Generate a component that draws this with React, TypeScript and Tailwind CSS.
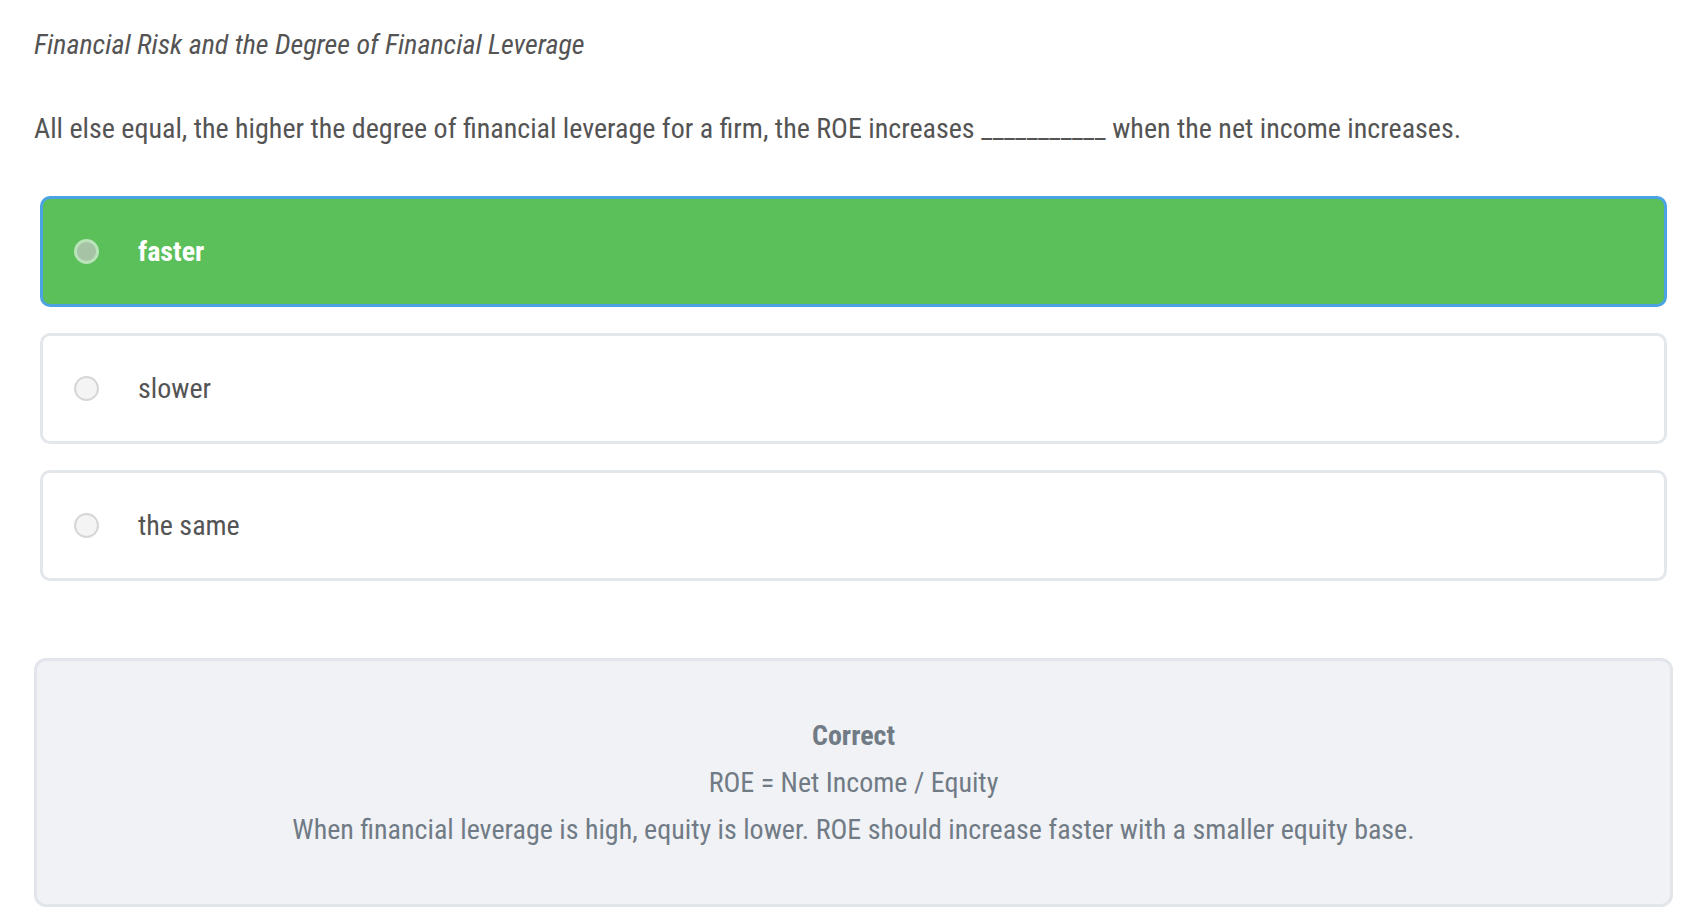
const font = "font-['Roboto_Condensed','Liberation_Sans_Narrow','DejaVu_Sans_Condensed',Roboto,sans-serif] [font-stretch:condensed]";

const options = [
  { label: 'faster', selected: true },
  { label: 'slower', selected: false },
  { label: 'the same', selected: false },
];

function Radio({ selected }: { selected: boolean }) {
  if (selected) {
    return (
      <span className="flex h-[25px] w-[25px] shrink-0 items-center justify-center rounded-full border-[3px] border-[#b9e3b9] bg-[#a6c3a6]" />
    );
  }
  return <span className="h-[25px] w-[25px] shrink-0 rounded-full border-2 border-[#d6d6d6] bg-[#f4f4f4]" />;
}

export default function App() {
  return (
    <div className={`min-h-screen bg-white pl-[34px] pr-[17px] pt-[28px] text-[#545454] ${font}`}>
      {/* Heading */}
      <p className="text-[28px] italic leading-[34px]">Financial Risk and the Degree of Financial Leverage</p>

      <p className="mt-[50px] text-[28px] leading-[34px]">
        All else equal, the higher the degree of financial leverage for a firm, the ROE increases ___________ when the net income increases.
      </p>

      {/* Answer options */}
      <div className="mx-[6px] mt-[50px] flex flex-col gap-[26px]">
        {options.map((o) => (
          <div
            key={o.label}
            className={
              o.selected
                ? 'flex h-[111px] items-center rounded-[10px] border-[3px] border-[#4ba3e3] bg-[#5bbf5a] pl-[31px]'
                : 'flex h-[111px] items-center rounded-[10px] border-[3px] border-[#e3e6eb] bg-white pl-[31px]'
            }
          >
            <Radio selected={o.selected} />
            <span className={o.selected ? 'ml-[39px] text-[28px] font-bold text-white' : 'ml-[39px] text-[28px] text-[#545454]'}>
              {o.label}
            </span>
          </div>
        ))}
      </div>

      {/* Feedback */}
      <div className="mt-[77px] flex h-[249px] flex-col items-center rounded-[12px] border-[3px] border-[#e2e5ea] bg-[#f0f2f6] pt-[51px] text-[28px] leading-[47px] text-[#707b85]">
        <p className="font-bold">Correct</p>
        <p>ROE = Net Income / Equity</p>
        <p>When financial leverage is high, equity is lower. ROE should increase faster with a smaller equity base.</p>
      </div>
    </div>
  );
}
